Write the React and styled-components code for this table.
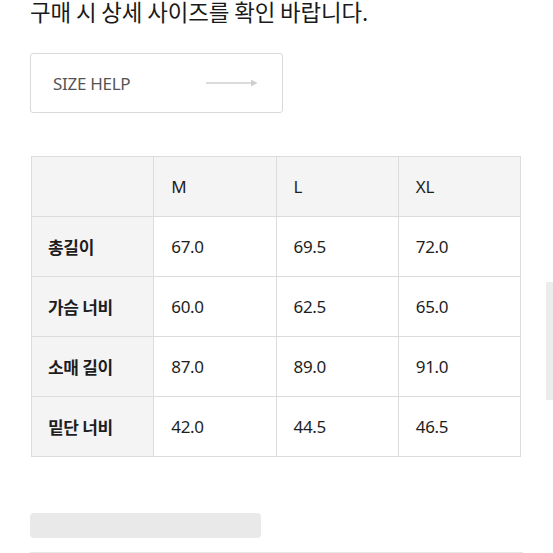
import React from 'react';
import styled, { createGlobalStyle } from 'styled-components';

const GlobalStyle = createGlobalStyle`
  html, body {
    margin: 0;
    padding: 0;
    background: #fff;
    overflow: hidden;
  }
  body {
    font-family: "Noto Sans", "Noto Sans CJK KR", sans-serif;
    color: #222;
  }
`;

const Page = styled.div`
  position: relative;
  width: 553px;
  height: 553px;
  padding: 0 30px;
  box-sizing: border-box;
  overflow: hidden;
`;

const Notice = styled.p`
  margin: 0;
  font-family: "Noto Sans CJK KR", sans-serif;
  font-size: 22.4px;
  line-height: 22px;
  color: #1a1a1a;
  letter-spacing: -0.1px;
`;

const HelpButton = styled.button`
  display: flex;
  align-items: center;
  justify-content: space-between;
  box-sizing: border-box;
  width: 253px;
  height: 60px;
  margin-top: 31px;
  padding: 0 24px 0 22px;
  background: #fff;
  border: 1px solid #d9d9d9;
  border-radius: 3px;
  font-family: "Noto Sans", sans-serif;
  font-size: 17px;
  color: #555;
  letter-spacing: -0.3px;
  cursor: pointer;
`;

const Table = styled.table`
  margin-top: 43px;
  margin-left: 1px;
  border-collapse: collapse;
  width: 490px;
  table-layout: fixed;
  border: 1px solid #d6d6d6;
`;

const Cell = styled.td`
  height: 59px;
  padding: 0 0 0 ${p => (p.$label ? 16 : 17)}px;
  border: 1px solid #dcdcdc;
  background: ${p => (p.$shade ? '#f4f4f4' : '#fff')};
  font-family: ${p => (p.$label ? '"Noto Sans CJK KR", sans-serif' : '"Noto Sans", sans-serif')};
  font-size: 17px;
  font-weight: ${p => (p.$label ? 700 : 400)};
  color: #1e1e1e;
  text-align: left;
  vertical-align: middle;
  letter-spacing: -0.3px;
`;

const Placeholder = styled.div`
  width: 231px;
  height: 25px;
  margin-top: 56px;
  background: #e9e9e9;
  border-radius: 4px;
`;

const Divider = styled.div`
  height: 1px;
  margin-top: 14px;
  background: #e6e6e6;
`;

const ScrollHint = styled.div`
  position: absolute;
  right: 0;
  top: 282px;
  width: 7px;
  height: 118px;
  background: #ececec;
`;

const Arrow = () => (
  <svg width="52" height="10" viewBox="0 0 52 10">
    <line x1="0" y1="5" x2="46" y2="5" stroke="#cfcfcf" strokeWidth="1.3" />
    <path d="M45 1.5 L51.5 5 L45 8.5 Z" fill="#cfcfcf" />
  </svg>
);

const sizes = ['M', 'L', 'XL'];
const rows = [
  ['총길이', '67.0', '69.5', '72.0'],
  ['가슴 너비', '60.0', '62.5', '65.0'],
  ['소매 길이', '87.0', '89.0', '91.0'],
  ['밑단 너비', '42.0', '44.5', '46.5'],
];

export default function App() {
  return (
    <>
      <GlobalStyle />
      <Page>
        <Notice>구매 시 상세 사이즈를 확인 바랍니다.</Notice>
        <HelpButton>
          <span>SIZE HELP</span>
          <Arrow />
        </HelpButton>
        <Table>
          <tbody>
            <tr>
              <Cell $shade />
              {sizes.map(s => (
                <Cell key={s} $shade>{s}</Cell>
              ))}
            </tr>
            {rows.map(r => (
              <tr key={r[0]}>
                <Cell $shade $label>{r[0]}</Cell>
                {r.slice(1).map((v, i) => (
                  <Cell key={i}>{v}</Cell>
                ))}
              </tr>
            ))}
          </tbody>
        </Table>
        <Placeholder />
        <Divider />
        <ScrollHint />
      </Page>
    </>
  );
}
